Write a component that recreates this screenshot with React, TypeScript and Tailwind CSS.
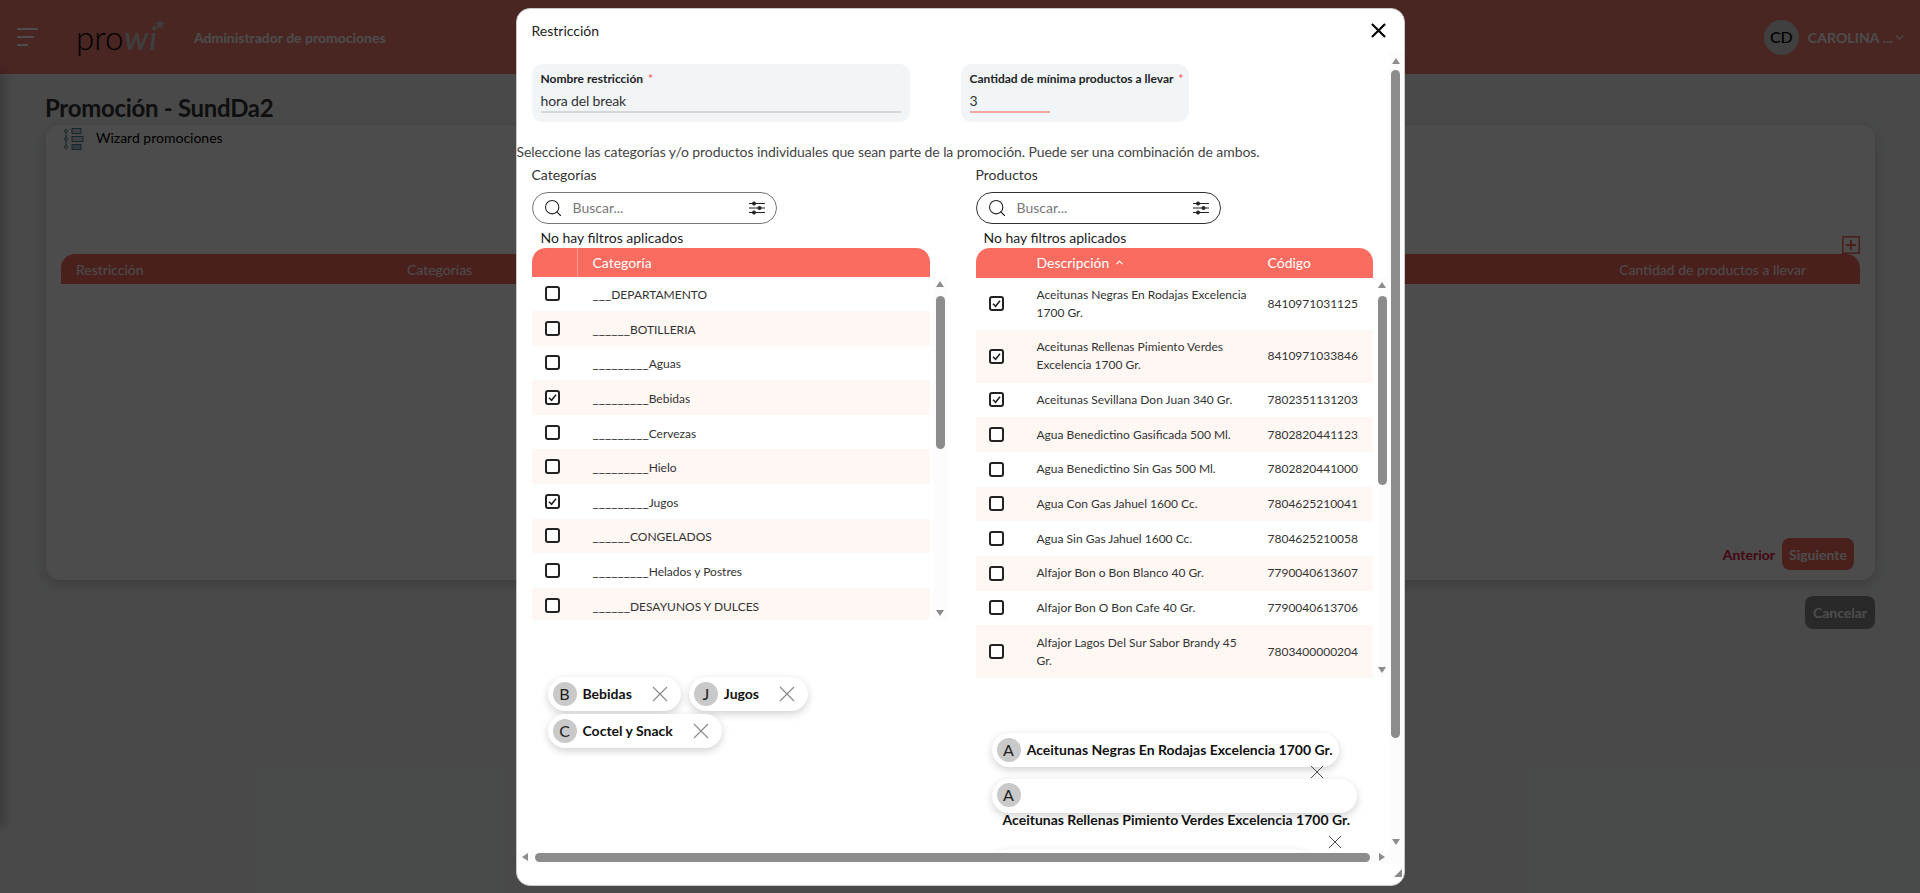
import { ChevronDown, ChevronUp, Search } from "lucide-react";

const categories = [
  { name: "___DEPARTAMENTO" },
  { name: "______BOTILLERIA" },
  { name: "_________Aguas" },
  { name: "_________Bebidas", checked: true },
  { name: "_________Cervezas" },
  { name: "_________Hielo" },
  { name: "_________Jugos", checked: true },
  { name: "______CONGELADOS" },
  { name: "_________Helados y Postres" },
  { name: "______DESAYUNOS Y DULCES" },
];

const products = [
  { name: "Aceitunas Negras En Rodajas Excelencia 1700 Gr.", code: "8410971031125", checked: true, tall: true },
  { name: "Aceitunas Rellenas Pimiento Verdes Excelencia 1700 Gr.", code: "8410971033846", checked: true, tall: true },
  { name: "Aceitunas Sevillana Don Juan 340 Gr.", code: "7802351131203", checked: true },
  { name: "Agua Benedictino Gasificada 500 Ml.", code: "7802820441123" },
  { name: "Agua Benedictino Sin Gas 500 Ml.", code: "7802820441000" },
  { name: "Agua Con Gas Jahuel 1600 Cc.", code: "7804625210041" },
  { name: "Agua Sin Gas Jahuel 1600 Cc.", code: "7804625210058" },
  { name: "Alfajor Bon o Bon Blanco 40 Gr.", code: "7790040613607" },
  { name: "Alfajor Bon O Bon Cafe 40 Gr.", code: "7790040613706" },
  { name: "Alfajor Lagos Del Sur Sabor Brandy 45 Gr.", code: "7803400000204", tall: true },
];

const Checkbox = ({ checked }: { checked?: boolean }) => (
  <span className="flex h-[15px] w-[15px] items-center justify-center rounded-[3px] border-2 border-[#222] bg-white">
    {checked && (
      <svg viewBox="0 0 12 12" className="h-[11px] w-[11px]" fill="none" stroke="#222" strokeWidth="1.7">
        <path d="M2.2 6.2 5 9l4.8-6" />
      </svg>
    )}
  </span>
);

const Arrow = ({ dir }: { dir: "up" | "down" | "left" | "right" }) => {
  const points = {
    up: "4,1 8,7 0,7",
    down: "0,1 8,1 4,7",
    left: "7,0 7,8 1,4",
    right: "1,0 1,8 7,4",
  };
  return (
    <svg viewBox="0 0 8 8" className="h-2 w-2 shrink-0" fill="#8c8c8c">
      <polygon points={points[dir]} />
    </svg>
  );
};

const CloseIcon = ({ className, strokeWidth }: { className: string; strokeWidth: number }) => (
  <svg viewBox="0 0 16 16" className={`shrink-0 ${className}`} fill="none" stroke="currentColor" strokeWidth={strokeWidth}>
    <path d="M1 1l14 14M15 1 1 15" />
  </svg>
);

const VerticalBar = ({ thumbTop, thumbHeight, className }: { thumbTop: string; thumbHeight: string; className: string }) => (
  <div className={`flex shrink-0 flex-col items-center justify-between bg-[#fcfcfc] ${className}`}>
    <Arrow dir="up" />
    <div className="w-[9px] flex-1">
      <div className={`w-[9px] rounded-full bg-[#8c8c8c] ${thumbTop} ${thumbHeight}`} />
    </div>
    <Arrow dir="down" />
  </div>
);

const SearchBox = ({ light }: { light?: boolean }) => (
  <div
    className={`flex h-[32px] w-[245px] items-center rounded-full bg-white pl-[10px] pr-[11px] ${
      light ? "border-[1.5px] border-[#777]" : "border border-[#333]"
    }`}
  >
    <Search size={20} strokeWidth={1.3} className="text-[#222]" />
    <span className="ml-[10px] flex-1 text-[14px] text-[#777]">Buscar...</span>
    <svg viewBox="0 0 16 14" className="h-[14px] w-[16px]" fill="#222" stroke="#222">
      <path d="M0 2.5h16M0 7h16M0 11.5h16" strokeWidth="1" />
      <circle cx="5" cy="2.5" r="1.6" />
      <circle cx="10.5" cy="7" r="1.6" />
      <circle cx="5" cy="11.5" r="1.6" />
    </svg>
  </div>
);

// los chips de productos no alcanzan en una linea y la X se sale por abajo
const Chip = ({ name, width, wrap, mb }: { name: string; width: string; wrap?: boolean; mb?: string }) => (
  <div
    className={`flex h-[34px] flex-wrap content-start items-center justify-end rounded-full bg-white pl-[5px] pt-[4px] shadow-[0_3px_8px_rgba(0,0,0,0.18)] ${width} ${mb ?? ""}`}
  >
    <span className="mr-auto flex h-[24px] w-[24px] items-center justify-center rounded-full bg-[#c9c9c9] text-[16px] text-[#222]">
      {name[0]}
    </span>
    <span className={`mx-[6px] py-[4px] text-[14px] font-bold leading-[18px] text-[#111] ${wrap ? "w-[349px]" : ""}`}>{name}</span>
    <span className="mr-[15px] mt-[2px] flex justify-end text-[#333]">
      <CloseIcon className="h-[14px] w-[14px]" strokeWidth={1} />
    </span>
  </div>
);

const SmallChip = ({ name }: { name: string }) => (
  <div className="flex h-[34px] items-center rounded-full bg-white pl-[5px] pr-[13px] shadow-[0_3px_8px_rgba(0,0,0,0.18)]">
    <span className="flex h-[24px] w-[24px] items-center justify-center rounded-full bg-[#c9c9c9] text-[16px] text-[#222]">
      {name[0]}
    </span>
    <span className="ml-[6px] text-[14px] font-bold text-[#111]">{name}</span>
    <span className="ml-[20px] text-[#888]">
      <CloseIcon className="h-[16px] w-[16px]" strokeWidth={1.1} />
    </span>
  </div>
);

const CategoryName = ({ name }: { name: string }) => {
  const prefix = name.match(/^_+/)?.[0] ?? "";
  return (
    <span className="ml-[15px] mt-[2px] text-[12px] leading-[18px] text-[#333]">
      <span className="text-[13.6px] leading-[18px]">{prefix}</span>
      {name.slice(prefix.length)}
    </span>
  );
};

const Background = () => (
  <div className="min-h-[893px] bg-[#f3f5f7]">
    <header className="flex h-[74px] items-center bg-[#f77f75] pl-[17px] pr-[14px]">
      <div className="flex w-[21px] flex-col gap-[6px]">
        <span className="h-[2px] w-[21px] bg-white" />
        <span className="h-[2px] w-[17px] bg-white" />
        <span className="h-[2px] w-[11px] bg-white" />
      </div>
      <div className="relative ml-[40px] flex w-[87px] items-baseline leading-none">
        <span className="ml-[-2px] text-[33px] font-light text-black">pro</span>
        <span className="ml-[1px] text-[33px] font-medium italic tracking-[1px] text-[#d4d4d4]">wi</span>
        <svg viewBox="0 0 10 10" className="absolute right-0 top-[-2px] h-[10px] w-[10px]" fill="#d4d4d4">
          <polygon points="5,0 6.3,3.5 10,3.8 7.1,6 8.1,10 5,7.8 1.9,10 2.9,6 0,3.8 3.7,3.5" />
        </svg>
      </div>
      <span className="ml-[29px] text-[14px] font-bold text-white">Administrador de promociones</span>
      <div className="ml-auto flex items-center">
        <span className="flex h-[35px] w-[35px] items-center justify-center rounded-full bg-[#d6d6d6] text-[16px] font-medium text-black">
          CD
        </span>
        <span className="ml-[9px] text-[14px] font-bold tracking-[0.1px] text-white">CAROLINA ...</span>
        <ChevronDown size={13} className="text-white" />
      </div>
    </header>

    <main className="pl-[46px] pr-[45px]">
      <h1 className="ml-[-1px] pt-[17px] text-[24px] font-bold leading-[34px] tracking-[-0.3px] text-[#333]">Promoción - SundDa2</h1>
      <section className="h-[455px] rounded-[14px] bg-white shadow-[0_4px_14px_rgba(0,0,0,0.18)]">
        <div className="flex h-[111px] items-start pl-[18px] pt-[3px]">
          <svg viewBox="0 0 20 22" className="h-[22px] w-[20px]" fill="none" stroke="#4a7f95" strokeWidth="1">
            <path d="M2 4v14" />
            <circle cx="2" cy="3" r="1.5" fill="#fff" />
            <circle cx="2" cy="11" r="1.5" fill="#fff" />
            <circle cx="2" cy="19" r="1.5" fill="#fff" />
            <rect x="8" y="0.5" width="9" height="5" fill="#d8e4ea" />
            <rect x="8" y="8.5" width="11" height="5" fill="#d8e4ea" />
            <rect x="8" y="16.5" width="9" height="5" fill="#a9c7d5" />
          </svg>
          <span className="ml-[12px] text-[14px] leading-[20px] text-black">Wizard promociones</span>
        </div>
        <div className="mx-[15px]">
          <div className="flex justify-end">
            <svg viewBox="0 0 18 18" className="h-[18px] w-[18px]" fill="none" stroke="#f96c5f" strokeWidth="1.6">
              <rect x="0.8" y="0.8" width="16.4" height="16.4" />
              <path d="M9 4v10M4 9h10" strokeWidth="2" />
            </svg>
          </div>
          <div className="flex h-[30px] items-center rounded-t-[14px] bg-[#f96c5f] text-[14px] text-white">
            <span className="ml-[15px] w-[331px]">Restricción</span>
            <span>Categorías</span>
            <span className="ml-auto mr-[54px]">Cantidad de productos a llevar</span>
          </div>
        </div>
        <div className="mr-[21px] mt-[254px] flex items-center justify-end">
          <span className="mr-[7px] text-[14px] font-bold text-[#e5123f]">Anterior</span>
          <span className="flex h-[32px] w-[72px] items-center justify-center rounded-[8px] bg-[#f96c5f] text-[14px] font-bold text-white">
            Siguiente
          </span>
        </div>
      </section>
      <div className="mt-[16px] flex justify-end">
        <span className="flex h-[33px] w-[70px] items-center justify-center rounded-[8px] bg-[#8a8a8a] text-[14px] font-bold text-white">
          Cancelar
        </span>
      </div>
    </main>
  </div>
);

const App = () => {
  return (
    <div className="relative h-[893px] overflow-hidden font-['Lato','Liberation_Sans',sans-serif]">
      <Background />
      <div className="absolute left-0 top-[74px] h-[749px] w-0 shadow-[0_0_10px_4px_rgba(0,0,0,0.25)]" />
      <div className="absolute inset-0 flex items-center justify-center bg-black/70">
        <div className="flex h-[878px] w-[889px] flex-col overflow-hidden rounded-[14px] border border-[#c8c8c8] bg-white">
          <div className="flex h-[43px] shrink-0 items-center justify-between pl-[15px] pr-[18px]">
            <span className="text-[14px] text-[#222]">Restricción</span>
            <span className="mt-[1px] text-black">
              <CloseIcon className="h-[15px] w-[15px]" strokeWidth={2.3} />
            </span>
          </div>

          <div className="flex min-h-0 flex-1">
            <div className="min-w-0 flex-1 overflow-hidden">
              <div className="flex gap-[51px] pl-[15px] pt-[12px]">
                <div className="h-[58px] w-[378px] rounded-[10px] bg-[#f1f5f8] px-[9px] pt-[6px]">
                  <p className="text-[12px] font-bold leading-[18px] text-[#222]">
                    Nombre restricción <span className="ml-[2px] text-[#f96c5f]">*</span>
                  </p>
                  <p className="mt-[3px] border-b-2 border-[#d5d8da] text-[14px] leading-[20px] tracking-[-0.15px] text-[#333]">hora del break</p>
                </div>
                <div className="h-[58px] w-[228px] rounded-[10px] bg-[#f1f5f8] px-[9px] pt-[6px]">
                  <p className="whitespace-nowrap text-[12px] font-bold leading-[18px] text-[#222]">
                    Cantidad de mínima productos a llevar <span className="ml-[2px] text-[#f96c5f]">*</span>
                  </p>
                  <p className="mt-[3px] w-[80px] border-b-2 border-[#f5a5a0] text-[14px] leading-[20px] text-[#333]">3</p>
                </div>
              </div>

              <p className="mt-[20px] whitespace-nowrap text-[14px] leading-[20px] tracking-[-0.09px] text-[#444]">
                Seleccione las categorías y/o productos individuales que sean parte de la promoción. Puede ser una combinación de ambos.
              </p>

              <div className="mt-[3px] flex pl-[15px]">
                <div className="w-[444px] shrink-0">
                  <p className="text-[14px] leading-[20px] text-[#333]">Categorías</p>
                  <div className="mt-[7px]">
                    <SearchBox light />
                  </div>
                  <p className="ml-[9px] mt-[4px] text-[14px] leading-[20px] text-[#222]">No hay filtros aplicados</p>
                  <div className="flex h-[29px] w-[398px] items-center rounded-t-[14px] bg-[#f96c5f] text-[14px] text-white">
                    <span className="h-full w-[46px] border-r border-[#fb9a91]" />
                    <span className="ml-[15px]">Categoría</span>
                  </div>
                  <div className="flex h-[343px]">
                    <div className="h-full w-[398px] overflow-hidden">
                      {categories.map((c, i) => (
                        <div key={c.name} className={`flex h-[34.6px] items-center ${i % 2 === 1 ? "bg-[#fff7f4]" : "bg-white"}`}>
                          <span className="flex w-[46px] justify-center pr-[5px]">
                            <Checkbox checked={c.checked} />
                          </span>
                          <CategoryName name={c.name} />
                        </div>
                      ))}
                    </div>
                    <VerticalBar className="ml-[3px] w-[15px] py-[3px]" thumbTop="mt-[8px]" thumbHeight="h-[153px]" />
                  </div>
                  <div className="mt-[57px] flex w-[300px] flex-wrap gap-x-[8px] gap-y-[3px] pl-[16px]">
                    <SmallChip name="Bebidas" />
                    <SmallChip name="Jugos" />
                    <SmallChip name="Coctel y Snack" />
                  </div>
                </div>

                <div className="w-[415px] shrink-0">
                  <p className="text-[14px] leading-[20px] text-[#333]">Productos</p>
                  <div className="mt-[7px]">
                    <SearchBox />
                  </div>
                  <p className="ml-[8px] mt-[4px] text-[14px] leading-[20px] text-[#222]">No hay filtros aplicados</p>
                  <div className="flex h-[30px] w-[397px] items-center rounded-t-[14px] bg-[#f96c5f] text-[14px] text-white">
                    <span className="ml-[61px] flex w-[231px] items-center">
                      Descripción <ChevronUp size={11} strokeWidth={2.5} className="ml-[5px]" />
                    </span>
                    <span>Código</span>
                  </div>
                  <div className="flex h-[399px]">
                    <div className="w-[397px]">
                      {products.map((p, i) => (
                        <div
                          key={p.code}
                          className={`flex items-center ${p.tall ? "h-[52.5px]" : "h-[34.7px]"} ${i % 2 === 1 ? "bg-[#fff7f4]" : "bg-white"}`}
                        >
                          <span className="ml-[13px] w-[48px]">
                            <Checkbox checked={p.checked} />
                          </span>
                          <span className="w-[215px] text-[12px] leading-[18px] text-[#333]">{p.name}</span>
                          <span className="ml-[16px] text-[12px] text-[#333]">{p.code}</span>
                        </div>
                      ))}
                    </div>
                    <VerticalBar className="ml-[4px] w-[11px] py-[3px]" thumbTop="mt-[7px]" thumbHeight="h-[189px]" />
                  </div>
                  <div className="mt-[56px] pl-[16px]">
                    <Chip name="Aceitunas Negras En Rodajas Excelencia 1700 Gr." width="w-[347px]" mb="mb-[12px]" />
                    <Chip name="Aceitunas Rellenas Pimiento Verdes Excelencia 1700 Gr." width="w-[365px]" wrap mb="mb-[36px]" />
                    <Chip name="Aceitunas Sevillana Don Juan 340 Gr." width="w-[320px]" />
                  </div>
                </div>
              </div>
            </div>
            <VerticalBar className="mr-[1px] w-[14px] py-[5px]" thumbTop="mt-[5px]" thumbHeight="h-[668px]" />
          </div>

          <div className="flex h-[13px] shrink-0 items-center bg-[#fcfcfc] pl-[4px] pr-[16px]">
            <Arrow dir="left" />
            <div className="ml-[6px] h-[9px] w-[835px] rounded-full bg-[#8c8c8c]" />
            <span className="ml-[8px]">
              <Arrow dir="right" />
            </span>
          </div>
          <div className="flex h-[21px] shrink-0 items-start justify-end pr-[2px] pt-[5px]">
            <svg viewBox="0 0 8 8" className="h-2 w-2" fill="#8c8c8c">
              <polygon points="8,0 8,8 0,8" />
            </svg>
          </div>
        </div>
      </div>
    </div>
  );
};

export default App;
